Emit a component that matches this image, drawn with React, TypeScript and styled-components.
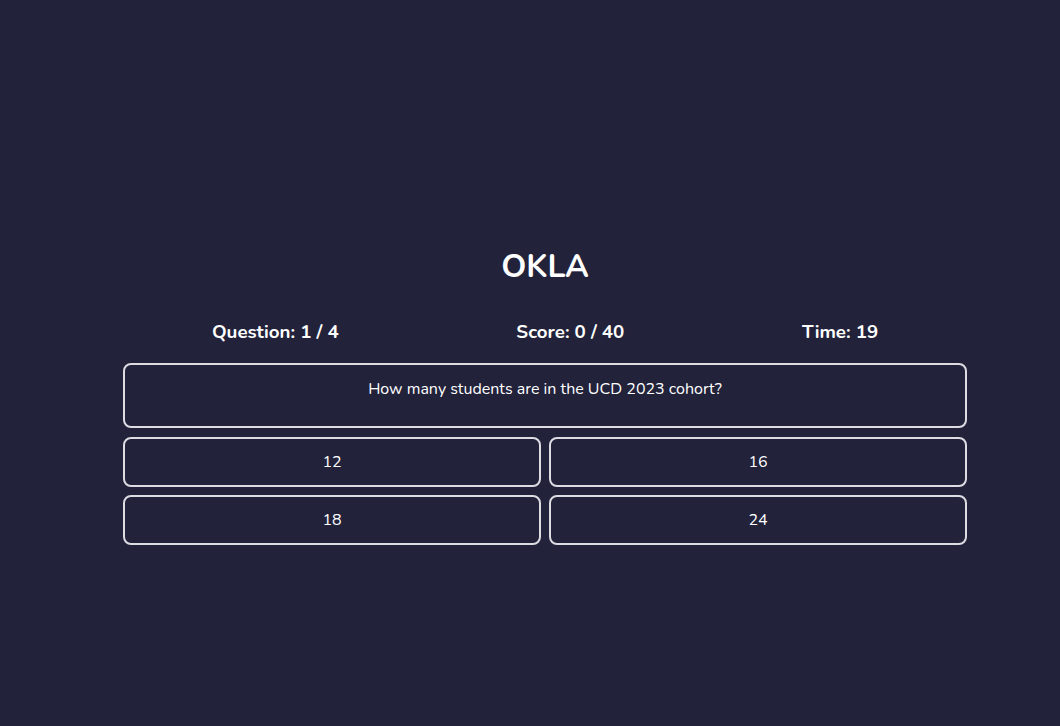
import React from "react";
import styled, { createGlobalStyle } from "styled-components";

const Global = createGlobalStyle`
  html, body { margin: 0; padding: 0; background: #22223b; }
  body { font-family: "Nunito", "Lato", "Noto Sans", sans-serif; color: #ffffff; }
`;

const Page = styled.div`
  min-height: 726px;
  padding: 247px 0 0 30px;
  box-sizing: border-box;
  display: flex;
  justify-content: center;
`;

const Quiz = styled.div`
  width: 844px;
  display: flex;
  flex-direction: column;
  align-items: stretch;
`;

const Title = styled.h1`
  margin: 0;
  text-align: center;
  font-size: 32px;
  font-weight: 700;
  line-height: 40px;
`;

const Stats = styled.div`
  display: flex;
  justify-content: space-around;
  margin-top: 33px;
  font-size: 18.72px;
  font-weight: 700;
  line-height: 24px;
`;

const QuestionBox = styled.div`
  margin-top: 19px;
  height: 65px;
  box-sizing: border-box;
  border: 2px solid #dcdce2;
  border-radius: 8px;
  padding-top: 13px;
  text-align: center;
  font-size: 16px;
  line-height: 22px;
`;

const Answers = styled.div`
  margin-top: 9px;
  display: grid;
  grid-template-columns: 1fr 1fr;
  gap: 8px;
`;

const Answer = styled.button`
  height: 50px;
  box-sizing: border-box;
  border: 2px solid #dcdce2;
  border-radius: 8px;
  background: transparent;
  color: #ffffff;
  font-family: inherit;
  font-size: 16px;
  cursor: pointer;
`;

const answers = ["12", "16", "18", "24"];

export default function App() {
  return (
    <>
      <Global />
      <Page>
        <Quiz>
          <Title>OKLA</Title>
          <Stats>
            <span>Question: 1 / 4</span>
            <span>Score: 0 / 40</span>
            <span>Time: 19</span>
          </Stats>
          <QuestionBox>How many students are in the UCD 2023 cohort?</QuestionBox>
          <Answers>
            {answers.map((a) => (
              <Answer key={a}>{a}</Answer>
            ))}
          </Answers>
        </Quiz>
      </Page>
    </>
  );
}
